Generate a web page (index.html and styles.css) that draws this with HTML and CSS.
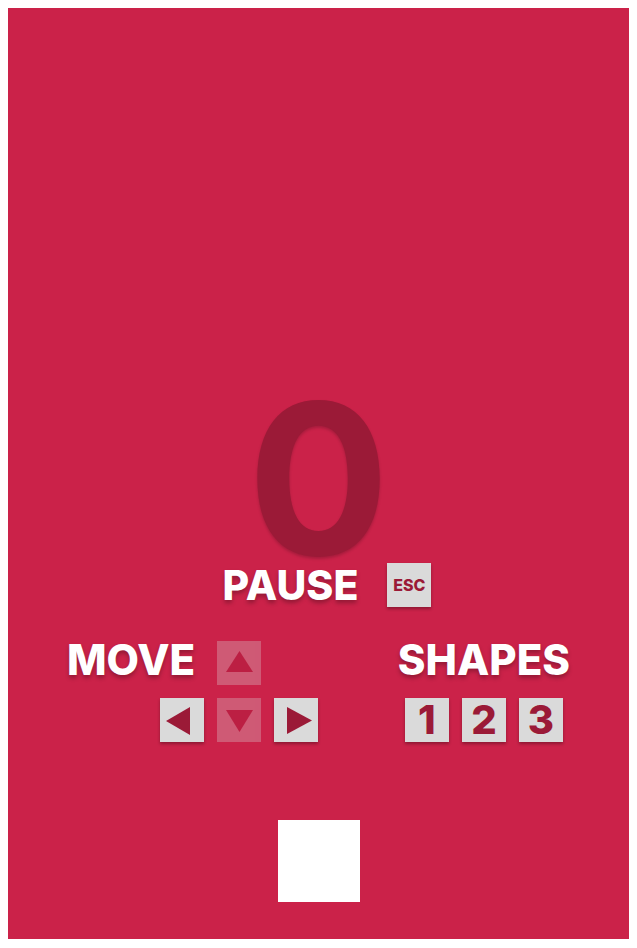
FILE: index.html
```html
<!DOCTYPE html>
<html lang="en">
<head>
<meta charset="utf-8">
<title>Game</title>
<link rel="stylesheet" href="styles.css">
</head>
<body>
<div class="game">
  <div class="score">0</div>
  <div class="pause-row">
    <span class="label">PAUSE</span>
    <span class="key key-esc">ESC</span>
  </div>
  <div class="controls">
    <div class="move">
      <span class="label move-label">MOVE</span>
      <span class="key key-up dim"><svg viewBox="0 0 44 44" width="44" height="44"><polygon points="9,31 36,31 22.5,10" /></svg></span>
      <span class="key key-left"><svg viewBox="0 0 44 44" width="44" height="44"><polygon points="6,23 30,9 30,37" /></svg></span>
      <span class="key key-down dim"><svg viewBox="0 0 44 44" width="44" height="44"><polygon points="9,12 36,12 22.5,34" /></svg></span>
      <span class="key key-right"><svg viewBox="0 0 44 44" width="44" height="44"><polygon points="38,22.5 13,9 13,36" /></svg></span>
    </div>
    <div class="shapes">
      <span class="label">SHAPES</span>
      <div class="num-keys">
        <span class="key num">1</span>
        <span class="key num">2</span>
        <span class="key num">3</span>
      </div>
    </div>
  </div>
  <div class="block"></div>
</div>
</body>
</html>
```

FILE: styles.css
```css
html {
  background: #ffffff;
}
body {
  margin: 8px;
  font-family: Inter, "Noto Sans", "Liberation Sans", sans-serif;
}
.game {
  width: 621px;
  height: 931px;
  box-sizing: border-box;
  background: #cb2249;
  display: flex;
  flex-direction: column;
  align-items: center;
  padding-top: 391px;
}
.score {
  font-size: 210px;
  line-height: 160px;
  height: 160px;
  font-weight: 700;
  color: #9b1a37;
  text-shadow: 0 2px 3px rgba(0, 0, 0, 0.18);
}
.label {
  font-size: 42px;
  line-height: 42px;
  font-weight: 800;
  color: #ffffff;
  text-shadow: 0 3px 4px rgba(0, 0, 0, 0.28);
  white-space: nowrap;
}
.pause-row {
  margin-top: 4px;
  display: flex;
  align-items: center;
  gap: 29px;
  padding-left: 17px;
}
.pause-row .label {
  font-size: 41px;
}
.key {
  width: 44px;
  height: 44px;
  background: #dadada;
  box-shadow: 0 2px 3px rgba(0, 0, 0, 0.3);
  color: #9b1a37;
  font-weight: 800;
  display: flex;
  align-items: center;
  justify-content: center;
}
.key svg {
  display: block;
}
.key polygon {
  fill: #9b1a37;
}
.key-esc {
  font-size: 16px;
  line-height: 44px;
}
.dim {
  opacity: 0.3;
  box-shadow: none;
}
.controls {
  margin-top: 32px;
  width: 100%;
  box-sizing: border-box;
  padding: 0 59px;
  display: flex;
  justify-content: space-between;
  align-items: flex-start;
}
.move {
  display: grid;
  grid-template-columns: 80px 44px 44px 44px;
  column-gap: 13px;
  row-gap: 13px;
  align-items: start;
}
.move-label {
  grid-column: 1 / 3;
  grid-row: 1;
}
.key-up {
  grid-column: 3;
  grid-row: 1;
  margin-top: 2px;
}
.key-left {
  grid-column: 2;
  grid-row: 2;
}
.key-down {
  grid-column: 3;
  grid-row: 2;
}
.key-right {
  grid-column: 4;
  grid-row: 2;
}
.shapes {
  display: flex;
  flex-direction: column;
  align-items: center;
}
.num-keys {
  margin-top: 17px;
  display: flex;
  gap: 13px;
}
.num {
  font-size: 40px;
  line-height: 44px;
}
.block {
  margin-top: 78px;
  width: 82px;
  height: 82px;
  background: #ffffff;
}
```
